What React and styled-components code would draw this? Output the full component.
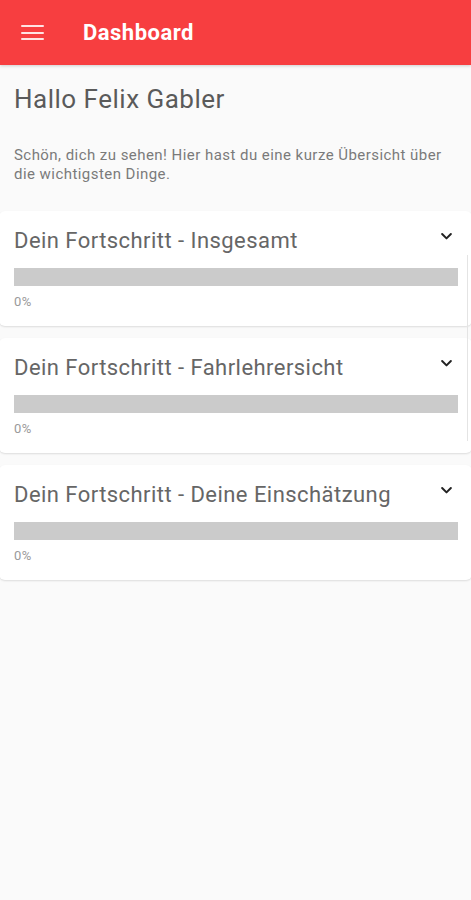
import React from "react";
import styled, { createGlobalStyle } from "styled-components";

const Global = createGlobalStyle`
  html, body { margin: 0; padding: 0; background: #fafafa; }
  body { font-family: Roboto, "Noto Sans", Arial, sans-serif; }
  * { box-sizing: border-box; }
`;

const Page = styled.div`
  width: 471px;
  min-height: 900px;
  background: #fafafa;
  position: relative;
  overflow: hidden;
`;

const AppBar = styled.header`
  height: 65px;
  background: #f73e40;
  display: flex;
  align-items: center;
  padding-left: 21px;
  box-shadow: 0 1px 3px rgba(0,0,0,0.18);
`;

const MenuButton = styled.div`
  width: 23px;
  height: 15px;
  display: flex;
  flex-direction: column;
  justify-content: space-between;
  margin-right: 39px;
  margin-top: 0px;
  span {
    display: block;
    height: 2px;
    background: #ffe3e3;
    border-radius: 1px;
  }
`;

const Title = styled.h1`
  margin: 0;
  color: #fff;
  font-size: 22px;
  font-weight: 700;
  letter-spacing: 0.5px;
`;

const Content = styled.main`
  padding: 18px 0 0;
`;

const Greeting = styled.h2`
  margin: 0 14px;
  font-size: 26px;
  font-weight: 400;
  color: #5a5a5a;
  line-height: 32px;
  letter-spacing: 0.5px;
`;

const Intro = styled.p`
  margin: 31px 14px 0;
  font-size: 15px;
  color: #7a7a7a;
  line-height: 19px;
  letter-spacing: 0.45px;
`;

const Cards = styled.div`
  margin-top: 27px;
  display: flex;
  flex-direction: column;
  gap: 12px;
`;

const Card = styled.section`
  background: #fff;
  border-radius: 6px;
  margin: 0 -1px;
  padding: 15px 14px 14px 15px;
  height: 115px;
  box-shadow: 0 1px 2px rgba(0,0,0,0.12);
`;

const CardHead = styled.div`
  display: flex;
  justify-content: space-between;
  align-items: flex-start;
`;

const CardTitle = styled.h3`
  margin: 0;
  font-size: 22px;
  font-weight: 400;
  color: #666;
  line-height: 30px;
  letter-spacing: 0.45px;
`;

const Chevron = styled.svg`
  width: 15px;
  height: 15px;
  margin-top: 3px;
  margin-right: 4px;
`;

const Track = styled.div`
  margin-top: 12px;
  height: 18px;
  background: #cbcbcb;
  width: 444px;
`;

const Percent = styled.div`
  margin-top: 8px;
  font-size: 13px;
  color: #9a9a9a;
  letter-spacing: 0.5px;
`;

const EdgeLine = styled.div`
  position: absolute;
  right: 3px;
  top: 255px;
  height: 186px;
  width: 1px;
  background: #e4e4e4;
`;

const items = [
  "Dein Fortschritt - Insgesamt",
  "Dein Fortschritt - Fahrlehrersicht",
  "Dein Fortschritt - Deine Einschätzung",
];

export default function App() {
  return (
    <Page>
      <Global />
      <AppBar>
        <MenuButton>
          <span />
          <span />
          <span />
        </MenuButton>
        <Title>Dashboard</Title>
      </AppBar>
      <Content>
        <Greeting>Hallo Felix Gabler</Greeting>
        <Intro>
          Schön, dich zu sehen! Hier hast du eine kurze Übersicht über die wichtigsten Dinge.
        </Intro>
        <Cards>
          {items.map((t) => (
            <Card key={t}>
              <CardHead>
                <CardTitle>{t}</CardTitle>
                <Chevron viewBox="0 0 24 24">
                  <path d="M5 8l7 7 7-7" fill="none" stroke="#222" strokeWidth="3.2" strokeLinecap="round" strokeLinejoin="round" />
                </Chevron>
              </CardHead>
              <Track />
              <Percent>0%</Percent>
            </Card>
          ))}
        </Cards>
      </Content>
      <EdgeLine />
    </Page>
  );
}
